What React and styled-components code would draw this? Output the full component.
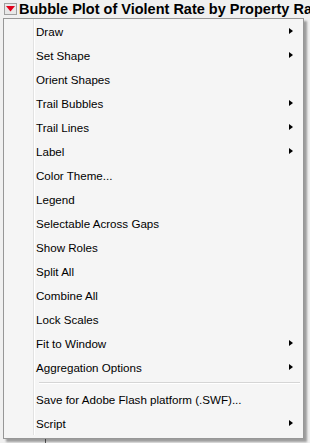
import React from "react";
import styled, { createGlobalStyle } from "styled-components";

const GlobalStyle = createGlobalStyle`
  html, body {
    margin: 0;
    padding: 0;
    background: #f0f0f0;
    overflow: hidden;
  }
`;

const Page = styled.div`
  width: 310px;
  height: 443px;
  position: relative;
  overflow: hidden;
  background: #f0f0f0;
  font-family: "Liberation Sans", Arial, sans-serif;
`;

const TitleBar = styled.div`
  display: flex;
  align-items: center;
  gap: 2px;
  height: 18px;
  padding-left: 4px;
  white-space: nowrap;
  overflow: hidden;
`;

const HotspotButton = styled.div`
  flex: none;
  width: 11px;
  height: 10px;
  border: 1px solid #a0a0a0;
  background: #e8e8e8;
  display: flex;
  align-items: center;
  justify-content: center;
`;

const Title = styled.span`
  font-weight: bold;
  font-size: 14.5px;
  color: #000;
`;

const Axis = styled.div`
  position: absolute;
  left: 45px;
  top: 420px;
  width: 1px;
  height: 30px;
  background: #606060;
`;

const Menu = styled.div`
  position: absolute;
  left: 3px;
  top: 18px;
  width: 299px;
  padding: 0 0 3px;
  background: #f5f5f5;
  border: 1px solid #979797;
  box-shadow: 3px 3px 2px rgba(0, 0, 0, 0.35);
  font-family: "Liberation Sans", Arial, sans-serif;
  font-size: 11.6px;
  color: #000;
`;

const Row = styled.div`
  display: flex;
  align-items: center;
  height: 24px;
`;

const Gutter = styled.div`
  width: 29px;
  align-self: stretch;
  border-right: 1px solid #e2e2e2;
  box-shadow: 1px 0 0 #ffffff;
  margin-right: 2px;
`;

const Label = styled.span`
  flex: 1;
`;

const Arrow = styled.span`
  width: 0;
  height: 0;
  border-top: 3.5px solid transparent;
  border-bottom: 3.5px solid transparent;
  border-left: 4px solid #000;
  margin-right: 10px;
`;

const SepRow = styled.div`
  display: flex;
  height: 8px;
`;

const SepLine = styled.div`
  flex: 1;
  margin: 3px 3px 0 3px;
  height: 0;
  border-top: 1px solid #d5d5d5;
  border-bottom: 1px solid #ffffff;
`;

const items = [
  ["Draw", true],
  ["Set Shape", true],
  ["Orient Shapes", false],
  ["Trail Bubbles", true],
  ["Trail Lines", true],
  ["Label", true],
  ["Color Theme...", false],
  ["Legend", false],
  ["Selectable Across Gaps", false],
  ["Show Roles", false],
  ["Split All", false],
  ["Combine All", false],
  ["Lock Scales", false],
  ["Fit to Window", true],
  ["Aggregation Options", true],
  null,
  ["Save for Adobe Flash platform (.SWF)...", false],
  ["Script", true],
];

export default function App() {
  return (
    <Page>
      <GlobalStyle />
      <TitleBar>
        <HotspotButton>
          <svg width="9" height="6" viewBox="0 0 9 6">
            <path d="M0 0 H9 L4.5 5.5 Z" fill="#e0001a" />
          </svg>
        </HotspotButton>
        <Title>Bubble Plot of Violent Rate by Property Rate</Title>
      </TitleBar>
      <Axis />
      <Menu>
        {items.map((it, i) =>
          it === null ? (
            <SepRow key={i}>
              <Gutter />
              <SepLine />
            </SepRow>
          ) : (
            <Row key={i}>
              <Gutter />
              <Label>{it[0]}</Label>
              {it[1] && <Arrow />}
            </Row>
          )
        )}
      </Menu>
    </Page>
  );
}
